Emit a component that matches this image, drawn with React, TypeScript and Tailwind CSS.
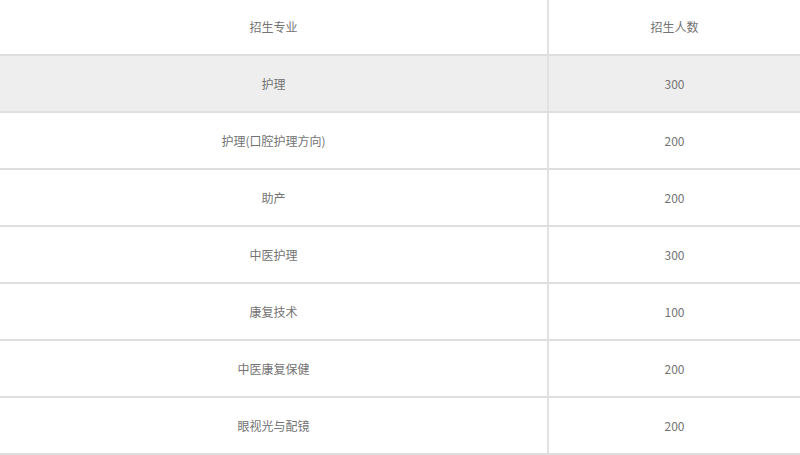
const ROWS = [
  { name: "护理", count: "300", shaded: true },
  { name: "护理(口腔护理方向)", count: "200" },
  { name: "助产", count: "200" },
  { name: "中医护理", count: "300" },
  { name: "康复技术", count: "100" },
  { name: "中医康复保健", count: "200" },
  { name: "眼视光与配镜", count: "200" },
];

function Row({
  name,
  count,
  shaded,
  header,
}: {
  name: string;
  count: string;
  shaded?: boolean;
  header?: boolean;
}) {
  return (
    <div
      className={`grid grid-cols-[549px_1fr] border-b-2 border-[#dedede] ${
        header ? "h-[56px]" : "h-[57px]"
      } ${shaded ? "bg-[#eeeeee]" : "bg-white"}`}
    >
      <div className="flex items-center justify-center border-r-2 border-[#e2e2e2]">
        {name}
      </div>
      <div className="flex items-center justify-center">{count}</div>
    </div>
  );
}

export default function App() {
  return (
    <div
      className="w-[800px] h-[455px] overflow-hidden bg-white text-[12px] text-[#737373]"
      style={{ fontFamily: '"Microsoft YaHei", "Noto Sans CJK SC", sans-serif' }}
    >
      <Row name="招生专业" count="招生人数" header />
      {ROWS.map((r, i) => (
        <Row key={i} {...r} />
      ))}
    </div>
  );
}
